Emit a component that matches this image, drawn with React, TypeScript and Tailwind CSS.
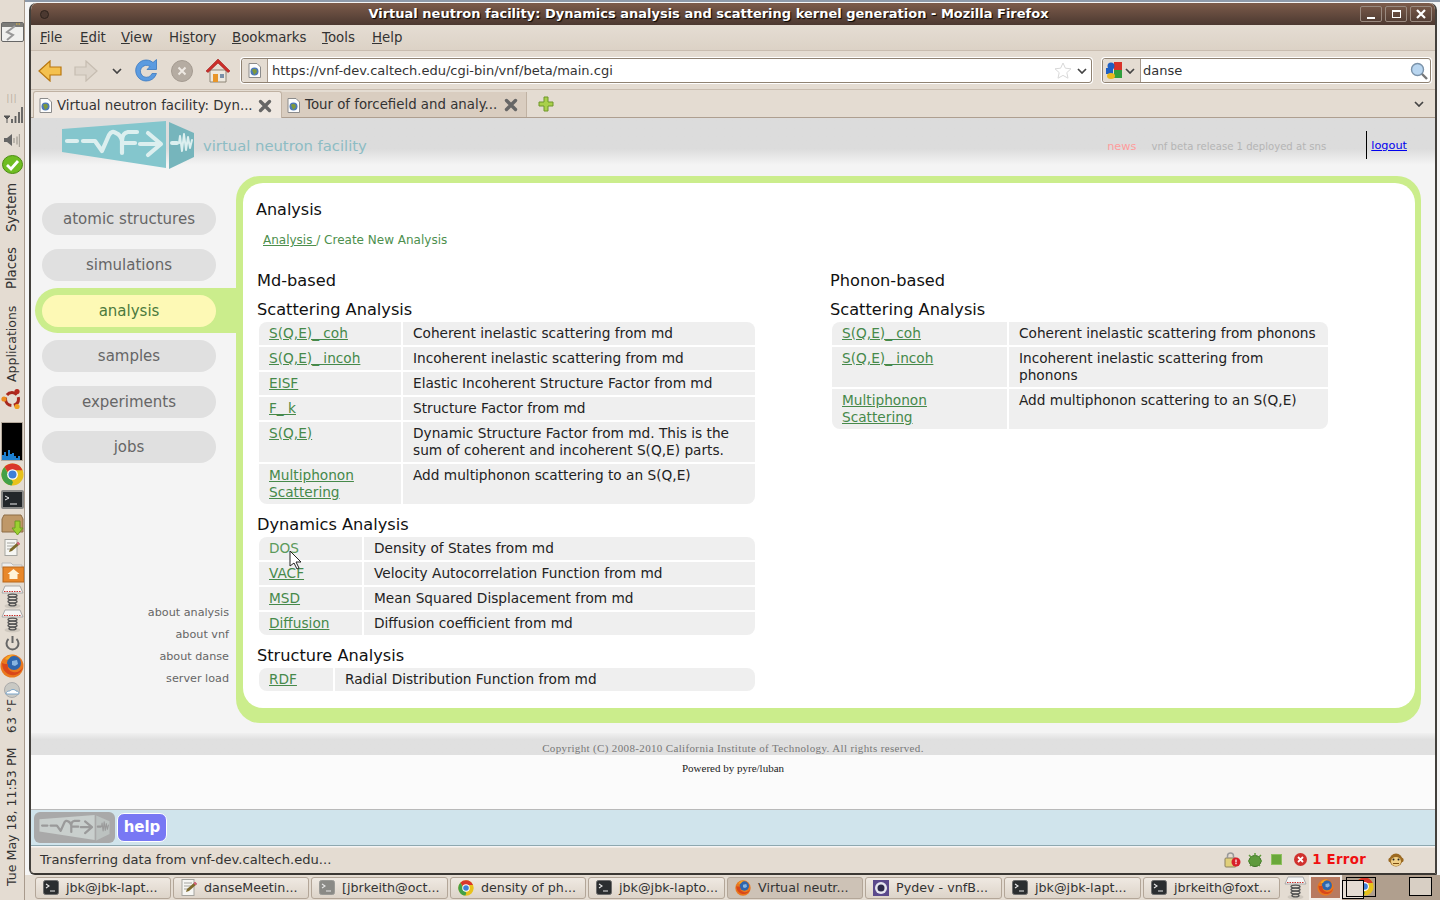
import React from "react";

const navItems = [
  { label: "atomic structures", gap: "" },
  { label: "simulations", gap: "mt-[14px]" },
  { label: "analysis", gap: "mt-[7px]", active: true },
  { label: "samples", gap: "mt-[7px]" },
  { label: "experiments", gap: "mt-[14px]" },
  { label: "jobs", gap: "mt-[13px]" },
];

const mdScattering = [
  { name: "S(Q,E)_ coh", text: ["Coherent inelastic scattering from md"] },
  { name: "S(Q,E)_ incoh", text: ["Incoherent inelastic scattering from md"] },
  { name: "EISF", text: ["Elastic Incoherent Structure Factor from md"] },
  { name: "F_ k", text: ["Structure Factor from md"] },
  { name: "S(Q,E)", text: ["Dynamic Structure Factor from md. This is the", "sum of coherent and incoherent S(Q,E) parts."] },
  { name: "Multiphonon", name2: "Scattering", text: ["Add multiphonon scattering to an S(Q,E)"] },
];

const mdDynamics = [
  { name: "DOS", text: ["Density of States from md"], hover: true },
  { name: "VACF", text: ["Velocity Autocorrelation Function from md"] },
  { name: "MSD", text: ["Mean Squared Displacement from md"] },
  { name: "Diffusion", text: ["Diffusion coefficient from md"] },
];

const mdStructure = [{ name: "RDF", text: ["Radial Distribution Function from md"] }];

const phonon = [
  { name: "S(Q,E)_ coh", text: ["Coherent inelastic scattering from phonons"] },
  { name: "S(Q,E)_ incoh", text: ["Incoherent inelastic scattering from", "phonons"] },
  { name: "Multiphonon", name2: "Scattering", text: ["Add multiphonon scattering to an S(Q,E)"] },
];

type Row = { name: string; name2?: string; text: string[]; hover?: boolean };

function AnalysisTable({ rows, col }: { rows: Row[]; col: string }) {
  return (
    <div className="w-full rounded-lg overflow-hidden flex flex-col gap-[2px] text-[13.7px] leading-[17px] text-[#222]">
      {rows.map((r, i) => (
        <div key={i} className="flex gap-[2px]">
          <div className={`${col} shrink-0 bg-[#efefef] pl-[10px] pr-[4px] pt-[3px] pb-[3px]`}>
            <a className={r.hover ? "text-[#5c9a5c]" : "underline text-[#46894a]"}>
              {r.name}
              {r.name2 ? <br /> : null}
              {r.name2}
            </a>
          </div>
          <div className="flex-1 bg-[#efefef] pl-[10px] pt-[3px] pb-[3px]">
            {r.text.map((t, j) => (
              <div key={j} className="whitespace-nowrap">{t}</div>
            ))}
          </div>
        </div>
      ))}
    </div>
  );
}

function VnfLogo({ w, h, grey }: { w: number; h: number; grey?: boolean }) {
  const a = grey ? "#c9cfcd" : "#84c6cd";
  const b = grey ? "#bcc2c0" : "#76b5bc";
  const s = grey ? "#9a9a9a" : "#dcefef";
  return (
    <svg width={w} height={h} viewBox="0 0 134 49" className="shrink-0">
      <polygon points="0,8 104,0 104,47 0,31" fill={a} />
      <polygon points="107,1 132,12 132,36 107,48" fill={b} />
      <g fill="none" stroke={s} strokeWidth="4.200" strokeLinecap="round" strokeLinejoin="round">
        <path d="M5 20h10M21 20h12L40 30 47 14Q50 9 54 12 59 14 60 20V32M60 20Q60 12 66 11H75M60 22H73" />
        <path d="M78 23H98M86 12L99 23 86 34" />
        <path d="M110 22h5" strokeWidth="4" />
        <path d="M117 22l1-7 2 15 2-17 2 16 2-13 2 11 2-8" strokeWidth="2" />
      </g>
    </svg>
  );
}

function Globe() {
  return (
    <svg width="13" height="15" viewBox="0 0 13 15" className="shrink-0">
      <path d="M1 .5h8l3.500 3.500v10.500h-11.500z" fill="#fdfdfd" stroke="#8b8b8b" />
      <circle cx="6.500" cy="8.500" r="4" fill="#4d79b8" />
      <path d="M4 7c2-2 3 0 4-1l1 3-3 3-1-3z" fill="#7f9a3a" />
    </svg>
  );
}

function TabClose() {
  return (
    <svg width="14" height="14" viewBox="0 0 14 14" className="shrink-0">
      <path d="M2.500 2.500l9 9M11.500 2.500l-9 9" stroke="#666" strokeWidth="3.400" strokeLinecap="round" />
    </svg>
  );
}

function Chevron({ c = "#444" }: { c?: string }) {
  return (
    <svg width="10" height="6" viewBox="0 0 10 6" className="shrink-0">
      <path d="M1 1l4 4 4-4" fill="none" stroke={c} strokeWidth="1.700" />
    </svg>
  );
}

function TermIcon({ dim }: { dim?: boolean }) {
  return (
    <svg width="16" height="15" viewBox="0 0 16 15" className="shrink-0">
      <rect x=".5" y=".5" width="15" height="14" rx="2" fill={dim ? "#8a8a86" : "#2b2e30"} stroke={dim ? "#9a9a96" : "#6c6c6c"} />
      <path d="M3 4l3 2-3 2M7 11h5" fill="none" stroke="#e8e8e8" strokeWidth="1.100" />
    </svg>
  );
}

function NoteIcon() {
  return (
    <svg width="16" height="17" viewBox="0 0 16 17" className="shrink-0">
      <rect x="1" y=".5" width="12" height="16" fill="#f6f6f3" stroke="#a5a5a0" />
      <path d="M3 4h8M3 7h7M3 10h4" stroke="#a5a5a0" />
      <path d="M5 13l1-3 8-7 2 2-8 7z" fill="#7d6a2c" />
      <path d="M12.500 4.300l2 2 1.500-1.500-2-2z" fill="#d6607a" />
    </svg>
  );
}

function ChromeIcon({ s = 16 }: { s?: number }) {
  return (
    <svg width={s} height={s} viewBox="0 0 24 24" className="shrink-0">
      <circle cx="12" cy="12" r="11.500" fill="#e8c21c" />
      <path d="M12 .5A11.500 11.500 0 0 1 22.500 7.500H12A4.500 4.500 0 0 0 7.800 10.500L3.500 4.200A11.500 11.500 0 0 1 12 .5z" fill="#d9372c" />
      <path d="M3.500 4.200L8 12l4.500 8-1.500 3.400A11.500 11.500 0 0 1 3.500 4.200z" fill="#43a047" />
      <circle cx="12" cy="12" r="5.600" fill="#fff" />
      <circle cx="12" cy="12" r="4.200" fill="#3f7fd6" />
    </svg>
  );
}

function FirefoxIcon({ s = 16 }: { s?: number }) {
  return (
    <svg width={s} height={s} viewBox="0 0 24 24" className="shrink-0">
      <circle cx="12" cy="12" r="11.500" fill="#e9781e" />
      <circle cx="14" cy="9" r="7" fill="#2f66ad" />
      <path d="M12 7l5-1 1 4-3 2-3-1z" fill="#88b5e0" />
      <path d="M2 9c0 9 7 13 13 12 4-1 7-4 8-8-2 4-6 6-10 5-4-1-6-4-5-8-2 0-4 0-6-1z" fill="#d9471a" />
      <path d="M5 5c2-3 6-5 10-4-3 0-5 2-6 4-1 1-3 1-4 0z" fill="#f5a623" />
    </svg>
  );
}

function SpringIcon() {
  return (
    <svg width="23" height="24" viewBox="0 0 23 24" className="shrink-0">
      <ellipse cx="11.500" cy="21" rx="8" ry="2.500" fill="#cfc8be" />
      <path d="M4 1h15l3 7H1z" fill="#f5f5f5" stroke="#a9a9a9" />
      <path d="M3 6.500h17" stroke="#c8322c" strokeWidth="1.200" strokeDasharray="1.500 1" />
      <g fill="none" stroke="#555" strokeWidth="1.400">
        <ellipse cx="11.500" cy="10.500" rx="4.500" ry="1.400" />
        <ellipse cx="11.500" cy="13.500" rx="4.500" ry="1.400" />
        <ellipse cx="11.500" cy="16.500" rx="4.500" ry="1.400" />
        <ellipse cx="11.500" cy="19.500" rx="3.500" ry="1.400" />
      </g>
    </svg>
  );
}

function PanelIcons() {
  return (
    <div className="flex flex-col items-center">
      <svg width="23" height="20" viewBox="0 0 23 20" className="mt-[22px] shrink-0">
        <rect x=".5" y=".5" width="22" height="19" rx="1.500" fill="#f0f0ee" stroke="#666" />
        <rect x="1" y="1" width="21" height="4" fill="#7b7b78" />
        <path d="M15 2h5" stroke="#e8b93c" strokeDasharray="1.500 1" />
        <path d="M14 4L6 10l6 3-6 5" fill="none" stroke="#999" strokeWidth="2" />
      </svg>
      <div className="mt-[55px] text-[#b5aa9d] text-[8px] leading-[4px] h-[4px] tracking-[1px]">|||</div>
      <svg width="20" height="16" viewBox="0 0 20 16" className="mt-[6px] shrink-0 ml-[1px]">
        <path d="M1 9h6L4 12zM4 12v4" fill="#555" stroke="#555" />
        <path d="M9 16v-4M12.500 16v-7M16 16v-11M19 16V0" stroke="#5d5d5d" strokeWidth="1.800" />
      </svg>
      <svg width="16" height="15" viewBox="0 0 16 15" className="mt-[10px] shrink-0">
        <path d="M0 5h3l5-4v12l-5-4H0z" fill="#666" />
        <path d="M10 5v5M13 3.500v8M15.500 1v13" stroke="#a9a39a" strokeWidth="1.400" />
      </svg>
      <svg width="21" height="20" viewBox="0 0 21 20" className="mt-[7px] shrink-0">
        <ellipse cx="10.500" cy="9.500" rx="10" ry="9" fill="#6fbd22" stroke="#4b8c10" />
        <path d="M5 10l4 4 7-8" fill="none" stroke="#fff" strokeWidth="2.800" />
      </svg>
      <div className="mt-[8px] h-[49px] [writing-mode:vertical-rl] rotate-180 text-[13.2px] leading-none text-[#333] whitespace-nowrap">System</div>
      <div className="mt-[16px] h-[41px] [writing-mode:vertical-rl] rotate-180 text-[13.2px] leading-none text-[#333] whitespace-nowrap">Places</div>
      <div className="mt-[17px] h-[76px] [writing-mode:vertical-rl] rotate-180 text-[12.5px] leading-none text-[#333] whitespace-nowrap">Applications</div>
      <svg width="22" height="22" viewBox="0 0 22 22" className="mt-[6px] shrink-0">
        <circle cx="11" cy="11" r="6.500" fill="none" stroke="#a8281e" strokeWidth="3" strokeDasharray="11 2.600" strokeDashoffset="3" />
        <circle cx="3" cy="11" r="2.600" fill="#ea8a1e" />
        <circle cx="16" cy="3.500" r="2.600" fill="#b5281e" />
        <circle cx="16" cy="18.500" r="2.600" fill="#f0a020" />
      </svg>
      <div className="mt-[12px] w-[22px] h-[39px] bg-black border border-[#b5aa9d] flex items-end shrink-0">
        <svg width="20" height="11" viewBox="0 0 20 11">
          <path d="M0 11V6h2V3h2v4h2V1h2v4h2V4h2v3h2v2h2V7h2v4z" fill="#1c7fd0" />
        </svg>
      </div>
      <div className="mt-[2px] h-[23px] flex items-center"><ChromeIcon s={23} /></div>
      <div className="mt-[4px] w-[23px] h-[19px] bg-[#23272a] border-2 border-[#8a8a88] rounded-[2px] shrink-0 flex items-center justify-center">
        <svg width="17" height="13" viewBox="0 0 17 13"><path d="M1 3l4 2-4 2M6 11h7" fill="none" stroke="#eee" /></svg>
      </div>
      <svg width="23" height="22" viewBox="0 0 23 22" className="mt-[5px] shrink-0">
        <path d="M1 5l2-4h17l2 4v13H1z" fill="#bf9868" stroke="#8d6c45" />
        <path d="M14 7h5v7h3l-5.500 7-5.500-7h3z" fill="#9bd030" stroke="#6d9a20" />
      </svg>
      <div className="mt-[1px] h-[21px] flex items-center"><NoteIcon /></div>
      <svg width="23" height="21" viewBox="0 0 23 21" className="mt-[4px] shrink-0">
        <path d="M1 1h9l2 2h9v3H1z" fill="#eee" stroke="#bbb" />
        <rect x="2" y="5" width="21" height="15" fill="#e8872a" stroke="#b8661a" />
        <path d="M12.500 7l6 5h-2v5h-8v-5h-2z" fill="#fff3d8" />
      </svg>
      <div className="mt-[2px] h-[24px]"><SpringIcon /></div>
      <div className="mt-0 h-[24px]"><SpringIcon /></div>
      <svg width="15" height="16" viewBox="0 0 15 16" className="mt-[2px] shrink-0">
        <path d="M7.500 1v7M3.500 4a6 6 0 1 0 8 0" fill="none" stroke="#666" strokeWidth="2" />
      </svg>
      <div className="mt-[3px] h-[24px]"><FirefoxIcon s={24} /></div>
      <svg width="16" height="16" viewBox="0 0 16 16" className="mt-[4px] shrink-0">
        <circle cx="8" cy="8" r="7.500" fill="#c9c9c4" stroke="#aaa" />
        <path d="M2 12c0-3 3-3 4-3 1-2 5-2 6 0 2 0 3 1 3 3z" fill="#fff" stroke="#7aa4c8" />
      </svg>
      <div className="mt-[2px] h-[33px] [writing-mode:vertical-rl] rotate-180 text-[12px] leading-none tracking-[0.5px] text-[#333] whitespace-nowrap">63 °F</div>
      <div className="mt-[13px] h-[140px] [writing-mode:vertical-rl] rotate-180 text-[12.6px] leading-none text-[#333] whitespace-nowrap">Tue May 18, 11:53 PM</div>
    </div>
  );
}

const taskItems = [
  { label: "jbk@jbk-lapt...", w: "w-[136px]", icon: <TermIcon /> },
  { label: "danseMeetin...", w: "w-[136px]", icon: <NoteIcon /> },
  { label: "[jbrkeith@oct...", w: "w-[137px]", icon: <TermIcon dim /> },
  { label: "density of ph...", w: "w-[136px]", icon: <ChromeIcon /> },
  { label: "jbk@jbk-lapto...", w: "w-[137px]", icon: <TermIcon /> },
  { label: "Virtual neutr...", w: "w-[136px]", icon: <FirefoxIcon />, active: true },
  {
    label: "Pydev - vnfB...",
    w: "w-[137px]",
    icon: (
      <svg width="16" height="16" viewBox="0 0 16 16" className="shrink-0">
        <rect width="16" height="16" fill="#5b4a8c" />
        <circle cx="8" cy="8" r="6" fill="#e6e6f0" />
        <circle cx="8" cy="8" r="3.500" fill="#2d2a4a" />
      </svg>
    ),
  },
  { label: "jbk@jbk-lapt...", w: "w-[137px]", icon: <TermIcon /> },
  { label: "jbrkeith@foxt...", w: "w-[137px]", icon: <TermIcon /> },
];

function Taskbar() {
  return (
    <div className="h-[25px] bg-[#e4dcd2] flex items-center pl-[10px] text-[12.7px] text-[#333]">
      {taskItems.map((t, i) => (
        <div
          key={i}
          className={`${t.w} h-[22px] mr-[2px] shrink-0 flex items-center pl-[7px] gap-[7px] rounded-[3px] border border-[#b3a698] whitespace-nowrap overflow-hidden ${
            t.active ? "bg-[#cdc2b6]" : "bg-gradient-to-b from-[#efe9e2] to-[#ddd4c9]"
          }`}
        >
          {t.icon}
          <span>{t.label}</span>
        </div>
      ))}
      <div className="ml-[2px] w-[23px] shrink-0"><SpringIcon /></div>
      <div className="ml-[2px] flex items-stretch h-[25px] flex-1 bg-[#b09f8e]">
        <div className="w-[33px] flex items-center justify-center bg-[#b87a60] border-2 border-[#f3eee8]"><FirefoxIcon s={17} /></div>
        <div className="w-[33px] relative">
          <div className="absolute right-[1px] top-[2px]"><ChromeIcon s={19} /></div>
          <div className="absolute left-0 top-[5px] w-[22px] h-[19px] bg-[#e4dcd2] border border-black" />
          <div className="absolute left-[4px] top-[2px] w-[30px] h-[20px] border border-black" />
        </div>
        <div className="w-[34px]" />
        <div className="w-[23px] h-[19px] mt-[2px] border border-black bg-[#d8cfc4]" />
      </div>
    </div>
  );
}

function TitleBar() {
  return (
    <div className="h-[22px] shrink-0 rounded-t-[6px] bg-gradient-to-b from-[#7d5c4b] to-[#4c3931] flex items-center relative">
      <div className="ml-[9px] w-[9px] h-[9px] rounded-full border border-[#2f231d] bg-[#4c3931]" />
      <div className="flex-1 text-center pl-[8px] text-white font-bold text-[13px] [text-shadow:1px_1px_1px_#000] whitespace-nowrap">
        Virtual neutron facility: Dynamics analysis and scattering kernel generation - Mozilla Firefox
      </div>
      <div className="flex gap-[3px] mr-[3px]">
        <div className="w-[22px] h-[16px] rounded-[2px] border border-[#9a8a80] flex items-end justify-center pb-[2px]"><div className="w-[8px] h-[2px] bg-white" /></div>
        <div className="w-[22px] h-[16px] rounded-[2px] border border-[#9a8a80] flex items-center justify-center"><div className="w-[9px] h-[8px] border border-white border-t-2" /></div>
        <div className="w-[22px] h-[16px] rounded-[2px] border border-[#9a8a80] flex items-center justify-center">
          <svg width="10" height="10" viewBox="0 0 10 10"><path d="M1 1l8 8M9 1l-8 8" stroke="#fff" strokeWidth="2.200" /></svg>
        </div>
      </div>
    </div>
  );
}

function MenuBar() {
  return (
    <div className="h-[26px] shrink-0 border-b border-[#c9bdb0] bg-gradient-to-b from-[#e5ddd3] to-[#dcd2c6] flex items-center pl-[9px] text-[13.33px] text-[#333]">
      <span className="w-[40px]"><u>F</u>ile</span>
      <span className="w-[41px]"><u>E</u>dit</span>
      <span className="w-[48px]"><u>V</u>iew</span>
      <span className="w-[63px]">Hi<u>s</u>tory</span>
      <span className="w-[90px]"><u>B</u>ookmarks</span>
      <span className="w-[50px]"><u>T</u>ools</span>
      <span><u>H</u>elp</span>
    </div>
  );
}

function NavToolbar() {
  return (
    <div className="h-[39px] shrink-0 border-b border-[#c9bdb0] bg-[#e4dcd2] flex items-center pl-[7px] pt-[1px]">
      <svg width="24" height="22" viewBox="0 0 24 22" className="shrink-0">
        <path d="M1 11L12 1v6h11v8H12v6z" fill="#f4c14f" stroke="#b9770f" strokeWidth="1.200" />
      </svg>
      <svg width="24" height="22" viewBox="0 0 24 22" className="ml-[12px] shrink-0">
        <path d="M23 11L12 1v6H1v8h11v6z" fill="#dcd4ca" stroke="#c6bdb1" strokeWidth="1.200" />
      </svg>
      <div className="ml-[14px]"><Chevron /></div>
      <svg width="23" height="23" viewBox="0 0 23 23" className="ml-[13px] shrink-0">
        <path d="M11 22A10.500 10.500 0 1 1 18 3.500L21.500 .5V10.500H12L15 7.500A6 6 0 1 0 17 14.500H21.500A10.500 10.500 0 0 1 11 22z" fill="#5b9be0" stroke="#3a78c0" strokeWidth=".8" />
      </svg>
      <div className="ml-[13px] w-[22px] h-[22px] rounded-full bg-[#b5aca2] border border-[#a49b91] flex items-center justify-center shrink-0">
        <svg width="10" height="10" viewBox="0 0 10 10"><path d="M1.500 1.500l7 7M8.500 1.500l-7 7" stroke="#eee9e3" strokeWidth="2" /></svg>
      </div>
      <svg width="24" height="24" viewBox="0 0 24 24" className="ml-[13px] shrink-0">
        <path d="M4 11h16v12H4z" fill="#eee9df" stroke="#8d8577" />
        <path d="M0 12L12 0l12 12-2 1.500L12 4 2 13.500z" fill="#cc2e2a" stroke="#9c1e1c" strokeWidth=".6" />
        <rect x="7" y="15" width="5" height="8" fill="#e8962a" />
        <rect x="14" y="15" width="4" height="4" fill="#7a8fa8" />
      </svg>
      <div className="ml-[11px] w-[851px] h-[25px] bg-white rounded-[3px] border border-[#8f8272] ring-1 ring-white flex items-center shrink-0">
        <div className="w-[26px] h-full flex items-center justify-center bg-[#e4dcd2] border-r border-[#a89a8c] rounded-l-[3px]"><Globe /></div>
        <span className="ml-[4px] flex-1 text-[13px] text-[#333]">https://vnf-dev.caltech.edu/cgi-bin/vnf/beta/main.cgi</span>
        <svg width="18" height="17" viewBox="0 0 18 17" className="shrink-0">
          <path d="M9 1l2.400 5.200 5.600.6-4.200 3.800 1.200 5.600L9 13.400l-5 2.800 1.200-5.600L1 6.800l5.600-.6z" fill="#fff" stroke="#d8d8d8" />
        </svg>
        <div className="mr-[4px] ml-[5px]"><Chevron /></div>
      </div>
      <div className="ml-[10px] w-[329px] h-[25px] bg-white rounded-[3px] border border-[#8f8272] ring-1 ring-white flex items-center shrink-0">
        <div className="w-[38px] h-full flex items-center pl-[3px] gap-[3px] bg-[#e4dcd2] border-r border-[#a89a8c] rounded-l-[3px]">
          <svg width="16" height="17" viewBox="0 0 16 17" className="shrink-0">
            <rect x="8" width="8" height="8" fill="#d8332a" />
            <rect x="8" y="8" width="8" height="8" fill="#2f9e3c" />
            <circle cx="5" cy="4" r="3.500" fill="#1d5fc4" />
            <rect y="6" width="7" height="6" fill="#1d5fc4" />
            <ellipse cx="5" cy="14" rx="4" ry="3" fill="#eab81c" />
          </svg>
          <Chevron />
        </div>
        <span className="ml-[2px] flex-1 text-[13px] text-[#333]">danse</span>
        <svg width="18" height="18" viewBox="0 0 18 18" className="mr-[2px] shrink-0">
          <path d="M11 11l6 6" stroke="#777" strokeWidth="2.400" />
          <circle cx="7.500" cy="7.500" r="6" fill="#b9d6f0" stroke="#7b93aa" strokeWidth="1.400" />
        </svg>
      </div>
    </div>
  );
}

function TabStrip() {
  return (
    <div className="h-[28px] shrink-0 border-b border-[#ae9f90] bg-[#e4dcd2] flex items-end pl-[2px] text-[13.33px] text-[#333]">
      <div className="w-[249px] h-[27px] -mb-[1px] bg-[#efe8e1] border border-b-0 border-[#c0b2a3] rounded-t-[3px] flex items-center pl-[5px] pr-[10px] pt-[1px] gap-[5px]">
        <Globe />
        <span className="flex-1 whitespace-nowrap">Virtual neutron facility: Dyn...</span>
        <TabClose />
      </div>
      <div className="w-[245px] h-[25px] bg-[#d9cdc0] border-r border-[#c0b2a3] flex items-center pl-[5px] pr-[8px] pt-[1px] gap-[5px]">
        <Globe />
        <span className="flex-1 whitespace-nowrap">Tour of forcefield and analy...</span>
        <TabClose />
      </div>
      <svg width="16" height="16" viewBox="0 0 16 16" className="ml-[11px] mb-[5px] shrink-0">
        <path d="M6 1h4v5h5v4h-5v5H6v-5H1V6h5z" fill="#a9d04a" stroke="#6f962a" />
      </svg>
      <div className="flex-1" />
      <div className="mr-[11px] mb-[10px]"><Chevron /></div>
    </div>
  );
}

function StatusIcons() {
  return (
    <div className="flex items-center">
      <svg width="17" height="16" viewBox="0 0 17 16" className="shrink-0">
        <rect x="1" y="6" width="11" height="9" rx="1" fill="#e0cf7a" stroke="#8a8060" />
        <path d="M3.500 6V4a3 3 0 0 1 6 0v2" fill="none" stroke="#999" strokeWidth="1.500" />
        <circle cx="12" cy="10" r="4.500" fill="#d8202a" />
        <rect x="11.400" y="7.500" width="1.200" height="3" fill="#fff" />
        <rect x="11.400" y="11" width="1.200" height="1.200" fill="#fff" />
      </svg>
      <svg width="16" height="16" viewBox="0 0 16 16" className="ml-[6px] shrink-0">
        <ellipse cx="8" cy="9" rx="6" ry="5.500" fill="#5f9a3c" stroke="#3e7026" />
        <path d="M2 3l3 3M14 3l-3 3M8 1v3M1 9h2M13 9h2M3 14l2-2M13 14l-2-2" stroke="#5f9a3c" strokeWidth="1.500" />
      </svg>
      <div className="ml-[8px] w-[11px] h-[11px] bg-[#6aa83a] border border-[#8fc060]" />
      <svg width="13" height="13" viewBox="0 0 13 13" className="ml-[12px] shrink-0">
        <circle cx="6.500" cy="6.500" r="6.500" fill="#d0312d" />
        <path d="M4 4l5 5M9 4l-5 5" stroke="#fff" strokeWidth="1.800" />
      </svg>
      <span className="ml-[5px] text-[13.3px] font-bold text-[#f01010] tracking-[0.3px]">1 Error</span>
      <svg width="16" height="16" viewBox="0 0 16 16" className="ml-[22px] shrink-0">
        <circle cx="2.500" cy="8" r="2.200" fill="#9c6a22" />
        <circle cx="13.500" cy="8" r="2.200" fill="#9c6a22" />
        <circle cx="8" cy="8" r="6.500" fill="#9c6a22" />
        <ellipse cx="8" cy="9.500" rx="5" ry="4.500" fill="#f0d088" />
        <circle cx="5.500" cy="7.500" r="1" fill="#222" />
        <circle cx="10.500" cy="7.500" r="1" fill="#222" />
        <path d="M5 11.500h6" stroke="#7a4c10" />
      </svg>
    </div>
  );
}

function Page() {
  return (
    <div className="flex-1 min-h-0 flex flex-col bg-[#f4f4f4]">
      <div className="h-[47px] shrink-0 bg-gradient-to-b from-[#dcdcdc] from-65% to-[#f4f4f4] flex pl-[31px] relative">
        <div className="mt-[3px]"><VnfLogo w={134} h={49} /></div>
        <span className="ml-[7px] mt-[18px] text-[14.8px] leading-[20px] text-[#8dbcc4] whitespace-nowrap">virtual neutron facility</span>
        <div className="flex-1" />
        <span className="mt-[21px] text-[11.3px] leading-[15px] text-[#ff9c9c]">news</span>
        <span className="ml-[15px] mt-[21px] text-[10.1px] leading-[15px] text-[#b5b5b5] whitespace-nowrap">vnf beta release 1 deployed at sns</span>
        <div className="ml-[40px] mt-[13px] h-[28px] border-l border-black pl-[4px] pt-[7px] text-[11.3px] leading-[15px] text-[#0000ee] underline mr-[28px]">logout</div>
      </div>

      <div className="h-[568px] shrink-0 flex">
        <div className="w-[205px] shrink-0 pl-[11px] flex flex-col">
          <div className="mt-[38px] flex flex-col">
            {navItems.map((n) =>
              n.active ? (
                <div key={n.label} className={`${n.gap} -ml-[7px] pl-[7px] py-[7px] h-[45px] rounded-l-full bg-[#cbed8c]`}>
                  <div className="w-[174px] h-[32px] rounded-full bg-[#fdf9b5] flex items-center justify-center pt-[1px] text-[15px] text-[#4b7a3d]">{n.label}</div>
                </div>
              ) : (
                <div key={n.label} className={`${n.gap} w-[174px] h-[32px] rounded-full bg-[#e0e0e0] flex items-center justify-center pt-[1px] text-[15px] text-[#666]`}>{n.label}</div>
              )
            )}
          </div>
          <div className="mt-[139px] pr-[7px] flex flex-col text-right text-[11.2px] leading-[22px] text-[#666]">
            <div>about analysis</div>
            <div>about vnf</div>
            <div>about danse</div>
            <div>server load</div>
          </div>
        </div>

        <div className="mt-[11px] w-[1185px] h-[547px] shrink-0 rounded-[24px] bg-[#cbed8c] pt-[7px] pl-[7px] pr-[6px] pb-[15px]">
          <div className="h-full rounded-[20px] bg-white flex flex-col relative text-[#111]">
            <div className="ml-[13px] mt-[17px] text-[16px] leading-[20px]">Analysis</div>
            <div className="ml-[20px] mt-[12px] text-[12px] leading-[16px] text-[#4d8f4d]">
              <a className="underline">Analysis </a> / Create New Analysis
            </div>
            <div className="flex mt-[23px] ml-[14px]">
              <div className="w-[498px]">
                <div className="text-[16.2px] leading-[20px]">Md-based</div>
                <div className="mt-[9px] text-[16.2px] leading-[20px]">Scattering Analysis</div>
                <div className="ml-[2px] mt-[2px]"><AnalysisTable rows={mdScattering} col="w-[142px]" /></div>
                <div className="mt-[11px] text-[16.2px] leading-[20px]">Dynamics Analysis</div>
                <div className="ml-[2px] mt-[2px]"><AnalysisTable rows={mdDynamics} col="w-[103px]" /></div>
                <div className="mt-[11px] text-[16.2px] leading-[20px]">Structure Analysis</div>
                <div className="ml-[2px] mt-[2px]"><AnalysisTable rows={mdStructure} col="w-[74px]" /></div>
              </div>
              <div className="ml-[75px] w-[498px]">
                <div className="text-[16.2px] leading-[20px]">Phonon-based</div>
                <div className="mt-[9px] text-[16.2px] leading-[20px]">Scattering Analysis</div>
                <div className="ml-[2px] mt-[2px]"><AnalysisTable rows={phonon} col="w-[175px]" /></div>
              </div>
            </div>
            <svg width="14" height="20" viewBox="0 0 14 20" className="absolute left-[46px] top-[367px]">
              <path d="M1 1v15l4-3 3 6 2-1-3-6h5z" fill="#fff" stroke="#222" />
            </svg>
          </div>
        </div>
      </div>

      <div className="h-[22px] shrink-0 bg-gradient-to-b from-[#f0f0f0] to-[#e0e0e0] to-30% text-center font-['Liberation_Serif',serif] text-[11px] leading-[30px] tracking-[0.35px] text-[#777]">
        Copyright (C) 2008-2010 California Institute of Technology. All rights reserved.
      </div>
      <div className="h-[54px] shrink-0 bg-[#fbfbfb] text-center font-['Liberation_Serif',serif] text-[11px] leading-[26px] text-[#222]">
        Powered by pyre/luban
      </div>
      <div className="h-[37px] shrink-0 border-t border-b border-t-[#b9b9b9] border-b-[#8ea8b0] bg-[#d0e4ec] flex items-center pl-[3px]">
        <div className="w-[81px] h-[31px] rounded-[6px] bg-[#a9a9a9] flex items-center justify-center">
          <VnfLogo w={72} h={26} grey />
        </div>
        <div className="ml-[2px] w-[50px] h-[29px] rounded-[7px] border border-white bg-[#7878f4] flex items-center justify-center text-white font-bold text-[15px]">help</div>
      </div>
    </div>
  );
}

export default function App() {
  return (
    <div className="w-[1440px] h-[900px] overflow-hidden flex bg-[#f6f6f6] font-['DejaVu_Sans',sans-serif]">
      <div className="w-[25px] h-full shrink-0 bg-[#e4dcd2] border-r border-[#a89a8c]">
        <PanelIcons />
      </div>
      <div className="flex-1 h-full flex flex-col min-w-0">
        <div className="h-[875px] shrink-0 pl-[4px] pr-[3px] pt-[1px] border-t-[2px] border-t-[#8e9aaa]">
          <div className="h-full rounded-t-[7px] rounded-bl-[6px] border-x-2 border-b-2 border-x-[#43403c] border-b-[#3a3733] flex flex-col overflow-hidden bg-[#e4dcd2]">
            <TitleBar />
            <MenuBar />
            <NavToolbar />
            <TabStrip />
            <Page />
            <div className="h-[26px] shrink-0 flex items-center justify-between pl-[9px] pr-[31px] pb-[2px] bg-[#e4dcd2] text-[13.1px] text-[#333] border-t border-t-[#f0eae3]">
              <span>Transferring data from vnf-dev.caltech.edu...</span>
              <StatusIcons />
            </div>
          </div>
        </div>
        <Taskbar />
      </div>
    </div>
  );
}
